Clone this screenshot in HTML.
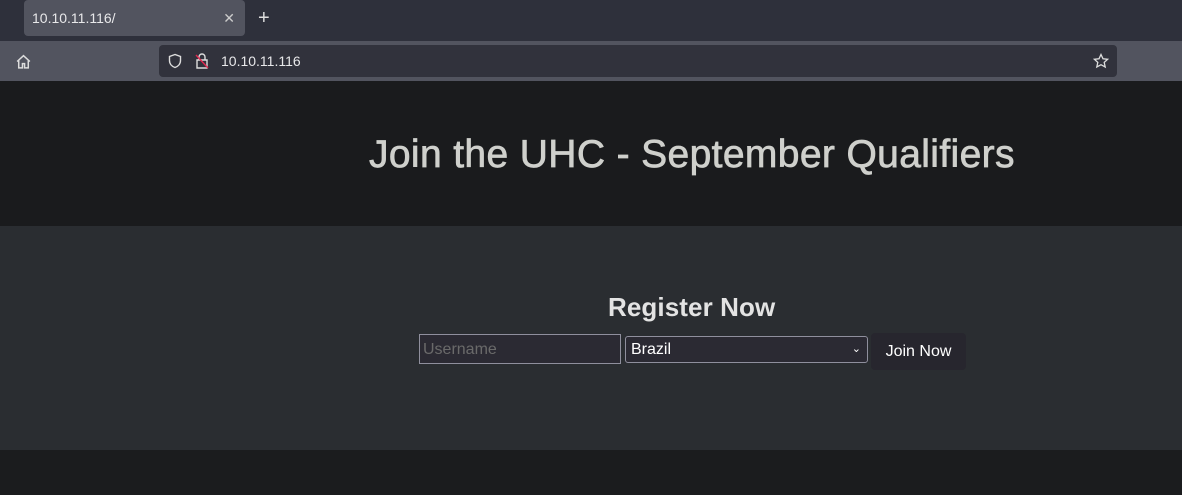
<!DOCTYPE html>
<html><head><style>
*{margin:0;padding:0;box-sizing:border-box}
body{width:1182px;height:495px;overflow:hidden;background:#1b1c1e;font-family:"Liberation Sans",sans-serif;position:relative}
.tabbar{position:absolute;top:0;left:0;width:1182px;height:41px;background:#2e303b}
.tab{position:absolute;left:24px;top:0;width:221px;height:36px;background:#52545f;border-radius:4px;color:#e8e8ea;font-size:14px;line-height:36px;padding-left:8px}
.tab .x{position:absolute;right:10px;top:0;font-size:14px;color:#ccc}
.plus{position:absolute;left:258px;top:7px;color:#ddd;font-size:20px;font-weight:300}
.nav{position:absolute;top:41px;left:0;width:1182px;height:40px;background:#52545f}
.url{position:absolute;left:159px;top:4px;width:958px;height:32px;background:#31323c;border-radius:4px;color:#e8e8ea;font-size:14px;line-height:32px;padding-left:62px}
.hdr{position:absolute;top:81px;left:0;width:1182px;height:145px;background:#1a1b1d}
h1{position:absolute;left:369px;top:52px;font-size:39px;font-weight:normal;color:#cfd0cc;white-space:nowrap;letter-spacing:0.37px;-webkit-text-stroke:0.7px #cfd0cc}
.sec{position:absolute;top:226px;left:0;width:1182px;height:224px;background:#2a2d31}
h2{position:absolute;left:608px;top:66px;font-size:26px;font-weight:bold;color:#e3e3e3;letter-spacing:0.1px}
.in{position:absolute;left:419px;top:108px;width:202px;height:30px;background:#2b2a33;border:1px solid #8f8f9d;color:#6a6a6a;font-size:16px;line-height:30px;padding-left:3px}
.sel{position:absolute;left:625px;top:110px;width:243px;height:27px;background:#2b2a33;border:1px solid #8f8f9d;border-radius:3px;color:#fff;font-size:16px;line-height:25px;padding-left:5px}
.sel span{position:absolute;right:6px;top:0;font-size:11px}
.btn{position:absolute;left:871px;top:107px;width:95px;height:37px;background:#27262e;border-radius:4px;color:#fff;font-size:16px;line-height:37px;text-align:center}
</style></head><body>
<div class="tabbar"><div class="tab">10.10.11.116/<span class="x">✕</span></div><div class="plus">+</div></div>
<div class="nav">
<svg style="position:absolute;left:15px;top:12px" width="17" height="17" viewBox="0 0 16 16" fill="none" stroke="#ddd" stroke-width="1.4"><path d="M2 8L8 2.5 14 8M3.5 7v7h3.5v-4h2v4h3.5V7"/></svg>
<div class="url">10.10.11.116
<svg style="position:absolute;left:8px;top:8px" width="16" height="16" viewBox="0 0 16 16" fill="none" stroke="#ddd" stroke-width="1.4"><path d="M8 1.5L2.5 3.5v4c0 3.5 2.5 6 5.5 7 3-1 5.5-3.5 5.5-7v-4z"/></svg>
<svg style="position:absolute;left:35px;top:7px" width="16" height="18" viewBox="0 0 16 18" fill="none" stroke-width="1.4"><path stroke="#ddd" d="M5 8V5a3 3 0 016 0v3M3 8h10v8H3z"/><path stroke="#e22850" d="M2 3l12 13"/></svg>
<svg style="position:absolute;right:8px;top:8px" width="16" height="16" viewBox="0 0 16 16" fill="none" stroke="#ddd" stroke-width="1.3"><path d="M8 1.5l2 4.3 4.6.5-3.4 3.1 1 4.6L8 11.7 3.8 14l1-4.6L1.4 6.3 6 5.8z"/></svg>
</div></div>
<div class="hdr"><h1>Join the UHC - September Qualifiers</h1></div>
<div class="sec"><h2>Register Now</h2>
<div class="in">Username</div>
<div class="sel">Brazil<span>⌄</span></div>
<div class="btn">Join Now</div></div>
</body></html>
